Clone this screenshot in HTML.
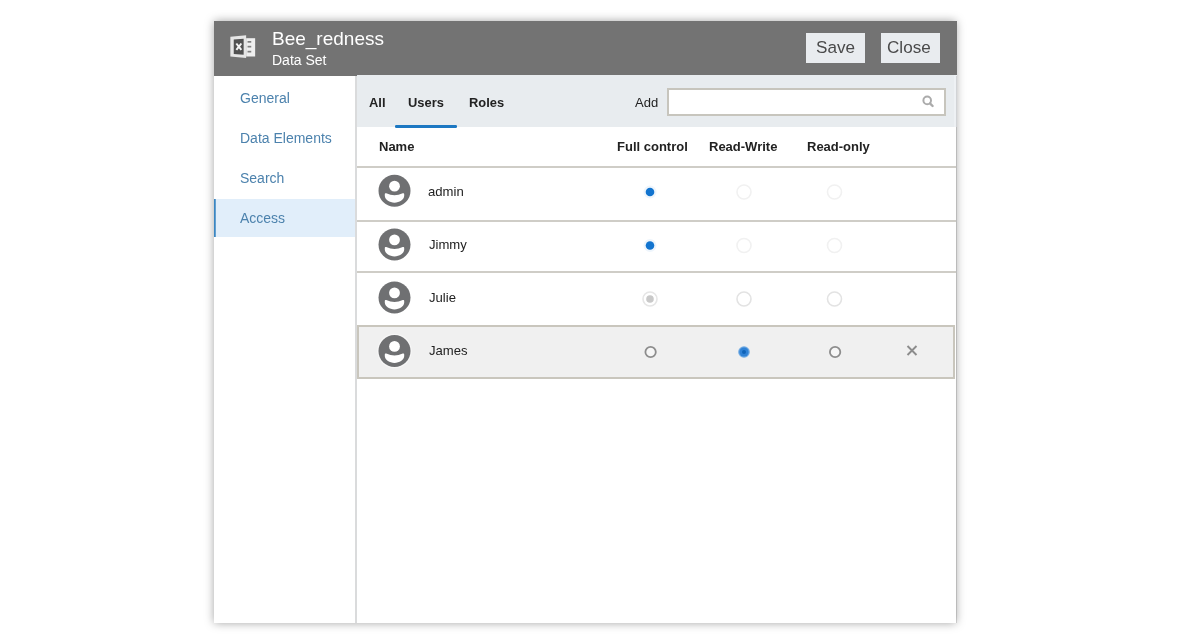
<!DOCTYPE html>
<html><head><meta charset="utf-8">
<style>
*{box-sizing:border-box;margin:0;padding:0}
html,body{width:1200px;height:639px;background:#fff;overflow:hidden;font-family:"Liberation Sans",sans-serif;}
#dlg{position:absolute;left:214px;top:21px;width:742px;height:602px;background:#fff;box-shadow:0 0 9px rgba(0,0,0,.36);}
#hdr{position:absolute;left:0;top:0;width:742.6px;height:54.8px;background:#737373;}
#title{position:absolute;left:58px;top:6.7px;font-size:19px;color:#fff;line-height:22px;white-space:nowrap}
#ico{position:absolute;left:14px;top:12px}
#sub{position:absolute;left:58px;top:31px;font-size:14px;color:#fff;line-height:16px;white-space:nowrap}
.btn{position:absolute;top:12px;height:30px;background:#e9ecef;color:#4a4a4a;font-size:17.1px;line-height:30px;text-align:center;text-indent:-1px}
#save{left:592px;width:59px}
#close{left:667px;width:59px}
#redge{position:absolute;left:742px;top:54.8px;width:1px;height:547.2px;background:rgba(0,0,0,.12);z-index:5}
#side{position:absolute;left:0;top:54.8px;width:141px;height:547.2px;background:#fff}
.nav{position:absolute;left:0;width:141px;height:40px;line-height:40px;padding-left:26px;font-size:14px;color:#4c82ad}
.nav i{position:relative;top:-.4px}
.nav.sel{background:linear-gradient(to right,#3a86c2 0,#3a86c2 1.4px,#e1eefa 1.8px);padding-left:26px;height:37.7px;line-height:38px}
#vdiv{position:absolute;left:141px;top:54.8px;width:2px;height:547.2px;background:#dadbdc}
#main{position:absolute;left:143px;top:54px;width:599px;height:548px;background:#fff}
#tb{position:absolute;left:0;top:-.3px;width:596.5px;height:52.6px;background:#e8ecef}
#strip{position:absolute;left:596.5px;top:-.3px;width:3px;height:52.6px;background:#eef1f4}
.tab{position:absolute;margin-left:.5px;top:.9px;height:52px;line-height:54px;font-size:12.9px;font-weight:bold;color:#222}
#ul{position:absolute;left:38px;top:50.7px;width:61.5px;height:2.5px;border-radius:1.25px;background:#1d78c2}
#add{position:absolute;left:277.8px;top:1px;line-height:54px;font-size:13px;color:#222}
#mag{position:absolute;left:563.5px;top:19.4px}
#inp{position:absolute;left:310px;top:13px;width:279px;height:28px;background:#fff;border:2px solid #c7c5bd}
.th{position:absolute;top:52px;height:40px;line-height:40px;font-size:13px;font-weight:bold;color:#222;white-space:nowrap}
.hl{position:absolute;left:0;width:599px;height:2px;background:#cfcdc7}
.row{position:absolute;left:0;width:599px}
.av{position:absolute;left:20.7px}
#rad{position:absolute;left:0;top:0}
#sel{position:absolute;left:0;top:250px;width:598px;height:54px;background:#f0f0f0;border:2px solid #c9c6bd}
.nm{position:absolute;left:71.3px;margin-top:.7px;font-size:13.1px;color:#222;white-space:nowrap}
#title,#sub,.tab,#add,.th,.nm,.nav i,.btn i{will-change:transform}
i{font-style:normal;display:inline-block}
#save i{position:relative;left:.7px}
#close i{position:relative;left:-.4px}
</style></head><body>
<div id="dlg">
 <div id="hdr">
  <svg id="ico" width="30" height="28" viewBox="14 12 30 28"><g transform="translate(-.15,.3)"><polygon points="16.5,15.5 32.3,14 32.3,36.8 16.5,35.2" fill="#e6e6e6"/><polygon points="19.9,18.2 29.8,17.4 29.8,33.5 19.9,32.7" fill="#515151"/><path d="M22.5,22.2 L27.5,28.6 M27.5,22.2 L22.5,28.6" stroke="#f4f4f4" stroke-width="2" fill="none"/><rect x="32.3" y="16.9" width="9" height="18.3" fill="#efefef"/><rect x="33.7" y="19.7" width="3.7" height="1.7" fill="#808080"/><rect x="33.7" y="24.5" width="3.7" height="1.7" fill="#808080"/><rect x="33.7" y="29.5" width="3.7" height="1.7" fill="#808080"/></g></svg>
  <div id="title">Bee_redness</div>
  <div id="sub">Data Set</div>
  <div class="btn" id="save"><i>Save</i></div>
  <div class="btn" id="close"><i>Close</i></div>
 </div>
 <div id="redge"></div>
 <div id="side">
  <div class="nav" style="top:2.2px"><i>General</i></div>
  <div class="nav" style="top:42.2px"><i>Data Elements</i></div>
  <div class="nav" style="top:82.2px"><i>Search</i></div>
  <div class="nav sel" style="top:123.2px"><i>Access</i></div>
 </div>
 <div id="vdiv"></div>
 <div id="main">
  <div id="tb">
   <div class="tab" style="left:11px">All</div>
   <div class="tab" style="left:50px">Users</div>
   <div class="tab" style="left:111px">Roles</div>
   <div id="ul"></div>
   <div id="add">Add</div>
   <div id="inp"></div><svg id="mag" width="16" height="16" viewBox="0 0 16 16"><circle cx="6.2" cy="6.4" r="3.8" fill="none" stroke="#ababab" stroke-width="2"/><path d="M9.2,9.6 L11.6,12" stroke="#ababab" stroke-width="2.4" stroke-linecap="round"/></svg>
  </div><div id="strip">
  </div>
  <div class="th" style="left:22px">Name</div>
  <div class="th" style="left:260px">Full control</div>
  <div class="th" style="left:352px">Read-Write</div>
  <div class="th" style="left:450px">Read-only</div>
  <div class="hl" style="top:91px"></div>
  <div class="hl" style="top:145px"></div>
  <div class="hl" style="top:196px"></div>
  <div id="sel"></div>
  <div class="nm" style="top:108px">admin</div>
  <div class="nm" style="top:161px;margin-left:.6px">Jimmy</div>
  <div class="nm" style="top:214.3px;margin-left:.6px">Julie</div>
  <div class="nm" style="top:267.1px;margin-left:.4px">James</div>
  <svg id="rad" width="599" height="548" viewBox="0 0 599 548"><g transform="translate(20.5,98.75)"><circle cx="17" cy="17" r="16" fill="#6f7072"/><circle cx="17" cy="12.4" r="5.4" fill="#fff"/><path d="M7.3,20.5 Q7.3,18.9 8.8,19.6 Q17,23.6 25.2,19.6 Q26.7,18.9 26.7,20.5 L26.7,22.3 C26.2,26.2 22,28.9 17,28.9 C12,28.9 7.8,26.2 7.3,22.3 Z" fill="#fff"/></g><g transform="translate(20.5,152.5)"><circle cx="17" cy="17" r="16" fill="#6f7072"/><circle cx="17" cy="12.4" r="5.4" fill="#fff"/><path d="M7.3,20.5 Q7.3,18.9 8.8,19.6 Q17,23.6 25.2,19.6 Q26.7,18.9 26.7,20.5 L26.7,22.3 C26.2,26.2 22,28.9 17,28.9 C12,28.9 7.8,26.2 7.3,22.3 Z" fill="#fff"/></g><g transform="translate(20.5,205.5)"><circle cx="17" cy="17" r="16" fill="#6f7072"/><circle cx="17" cy="12.4" r="5.4" fill="#fff"/><path d="M7.3,20.5 Q7.3,18.9 8.8,19.6 Q17,23.6 25.2,19.6 Q26.7,18.9 26.7,20.5 L26.7,22.3 C26.2,26.2 22,28.9 17,28.9 C12,28.9 7.8,26.2 7.3,22.3 Z" fill="#fff"/></g><g transform="translate(20.5,259)"><circle cx="17" cy="17" r="17.3" fill="#f7f7f7"/><circle cx="17" cy="17" r="16" fill="#6f7072"/><circle cx="17" cy="12.4" r="5.4" fill="#fff"/><path d="M7.3,20.5 Q7.3,18.9 8.8,19.6 Q17,23.6 25.2,19.6 Q26.7,18.9 26.7,20.5 L26.7,22.3 C26.2,26.2 22,28.9 17,28.9 C12,28.9 7.8,26.2 7.3,22.3 Z" fill="#fff"/></g><circle cx="293" cy="117" r="6.5" fill="#eef5fc"/><circle cx="293" cy="117" r="4.3" fill="#1274cf"/><circle cx="387" cy="117" r="7" fill="none" stroke="#f1f1f1" stroke-width="1.6"/><circle cx="477.5" cy="117" r="7" fill="none" stroke="#f1f1f1" stroke-width="1.6"/><circle cx="293" cy="170.5" r="6.5" fill="#eef5fc"/><circle cx="293" cy="170.5" r="4.3" fill="#1274cf"/><circle cx="387" cy="170.5" r="7" fill="none" stroke="#f1f1f1" stroke-width="1.6"/><circle cx="477.5" cy="170.5" r="7" fill="none" stroke="#f1f1f1" stroke-width="1.6"/><circle cx="293" cy="224" r="7" fill="none" stroke="#e6e6e6" stroke-width="1.6"/><circle cx="293" cy="224" r="3.8" fill="#c9c9c9"/><circle cx="387" cy="224" r="7" fill="none" stroke="#e3e3e3" stroke-width="1.6"/><circle cx="477.5" cy="224" r="7" fill="none" stroke="#e3e3e3" stroke-width="1.6"/><circle cx="293.6" cy="277" r="5.2" fill="#f6f6f6" stroke="#8d8d8d" stroke-width="1.8"/><circle cx="387" cy="277" r="5.8" fill="#6fa9e2"/><circle cx="387" cy="277" r="4.6" fill="#2f82d6"/><circle cx="387" cy="277" r="2" fill="#0f63b8"/><circle cx="478.1" cy="277" r="5.2" fill="#f6f6f6" stroke="#8d8d8d" stroke-width="1.8"/><path d="M550.5,271 L559.5,280 M559.5,271 L550.5,280" stroke="#8c8c8c" stroke-width="1.9" fill="none"/></svg>
 </div>
</div>
</body></html>
